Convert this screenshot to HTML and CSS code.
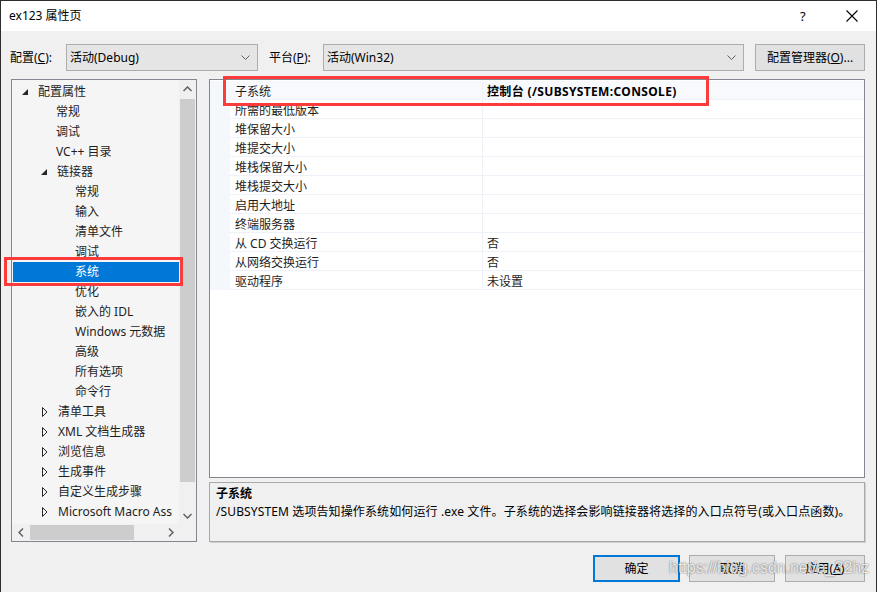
FILE: index.html
```html
<!DOCTYPE html>
<html lang="zh-CN">
<head>
<meta charset="utf-8">
<title>ex123 属性页</title>
<link rel="stylesheet" href="styles.css">
</head>
<body>
<div class="window">
  <div class="titlebar">
    <span class="title">ex123 属性页</span>
    <span class="help">?</span>
    <svg class="close" width="12" height="12" viewBox="0 0 12 12"><path d="M0.5 0.5 L11.5 11.5 M11.5 0.5 L0.5 11.5" stroke="#000" stroke-width="1.1" fill="none"/></svg>
  </div>
  <div class="content">
    <div class="config-row">
      <span class="lbl lbl-config">配置(<u>C</u>):</span>
      <div class="combo combo-config"><span>活动(Debug)</span><svg class="chev" width="9" height="5" viewBox="0 0 9 5"><path d="M0.5 0.5 L4.5 4.5 L8.5 0.5" stroke="#606060" fill="none"/></svg></div>
      <span class="lbl lbl-platform">平台(<u>P</u>):</span>
      <div class="combo combo-platform"><span>活动(Win32)</span><svg class="chev" width="9" height="5" viewBox="0 0 9 5"><path d="M0.5 0.5 L4.5 4.5 L8.5 0.5" stroke="#606060" fill="none"/></svg></div>
      <div class="btn btn-manager">配置管理器(<u>O</u>)...</div>
    </div>
    <div class="main">
      <div class="tree-panel">
        <div class="tree-top">
          <ul class="tree">
            <li class="row l0"><svg class="exp" width="6" height="6" viewBox="0 0 6 6"><polygon points="6,0 6,6 0,6" fill="#262626"/></svg><span>配置属性</span></li>
            <li class="row l1">常规</li>
            <li class="row l1">调试</li>
            <li class="row l1">VC++ 目录</li>
            <li class="row l1 parent"><svg class="exp" width="6" height="6" viewBox="0 0 6 6"><polygon points="6,0 6,6 0,6" fill="#262626"/></svg><span>链接器</span></li>
            <li class="row l2">常规</li>
            <li class="row l2">输入</li>
            <li class="row l2">清单文件</li>
            <li class="row l2">调试</li>
            <li class="row l2 selected">系统</li>
            <li class="row l2">优化</li>
            <li class="row l2">嵌入的 IDL</li>
            <li class="row l2">Windows 元数据</li>
            <li class="row l2">高级</li>
            <li class="row l2">所有选项</li>
            <li class="row l2">命令行</li>
            <li class="row l1 parent"><svg class="col" width="6" height="10" viewBox="0 0 6 10"><polygon points="0.5,0.5 5,5 0.5,9.5" fill="none" stroke="#262626"/></svg><span>清单工具</span></li>
            <li class="row l1 parent"><svg class="col" width="6" height="10" viewBox="0 0 6 10"><polygon points="0.5,0.5 5,5 0.5,9.5" fill="none" stroke="#262626"/></svg><span>XML 文档生成器</span></li>
            <li class="row l1 parent"><svg class="col" width="6" height="10" viewBox="0 0 6 10"><polygon points="0.5,0.5 5,5 0.5,9.5" fill="none" stroke="#262626"/></svg><span>浏览信息</span></li>
            <li class="row l1 parent"><svg class="col" width="6" height="10" viewBox="0 0 6 10"><polygon points="0.5,0.5 5,5 0.5,9.5" fill="none" stroke="#262626"/></svg><span>生成事件</span></li>
            <li class="row l1 parent"><svg class="col" width="6" height="10" viewBox="0 0 6 10"><polygon points="0.5,0.5 5,5 0.5,9.5" fill="none" stroke="#262626"/></svg><span>自定义生成步骤</span></li>
            <li class="row l1 parent"><svg class="col" width="6" height="10" viewBox="0 0 6 10"><polygon points="0.5,0.5 5,5 0.5,9.5" fill="none" stroke="#262626"/></svg><span>Microsoft Macro Ass</span></li>
          </ul>
          <div class="vscroll">
            <div class="sb-btn"><svg width="9" height="6" viewBox="0 0 9 6"><path d="M0.5 5 L4.5 1 L8.5 5" stroke="#606060" stroke-width="1.5" fill="none"/></svg></div>
            <div class="vtrack"><div class="vthumb"></div></div>
            <div class="sb-btn"><svg width="9" height="6" viewBox="0 0 9 6"><path d="M0.5 1 L4.5 5 L8.5 1" stroke="#606060" stroke-width="1.5" fill="none"/></svg></div>
          </div>
        </div>
        <div class="hscroll">
          <div class="sb-btn h"><svg width="6" height="9" viewBox="0 0 6 9"><path d="M5 0.5 L1 4.5 L5 8.5" stroke="#606060" stroke-width="1.5" fill="none"/></svg></div>
          <div class="htrack"><div class="hthumb"></div></div>
          <div class="sb-btn h"><svg width="6" height="9" viewBox="0 0 6 9"><path d="M1 0.5 L5 4.5 L1 8.5" stroke="#606060" stroke-width="1.5" fill="none"/></svg></div>
          <div class="corner"></div>
        </div>
        <div class="redbox tree-red"></div>
      </div>
      <div class="right-col">
        <div class="grid">
          <div class="grow first"><div class="gut"></div><div class="gname">子系统</div><div class="gval bold">控制台 (/SUBSYSTEM:CONSOLE)</div></div>
          <div class="grow"><div class="gut"></div><div class="gname">所需的最低版本</div><div class="gval"></div></div>
          <div class="grow"><div class="gut"></div><div class="gname">堆保留大小</div><div class="gval"></div></div>
          <div class="grow"><div class="gut"></div><div class="gname">堆提交大小</div><div class="gval"></div></div>
          <div class="grow"><div class="gut"></div><div class="gname">堆栈保留大小</div><div class="gval"></div></div>
          <div class="grow"><div class="gut"></div><div class="gname">堆栈提交大小</div><div class="gval"></div></div>
          <div class="grow"><div class="gut"></div><div class="gname">启用大地址</div><div class="gval"></div></div>
          <div class="grow"><div class="gut"></div><div class="gname">终端服务器</div><div class="gval"></div></div>
          <div class="grow"><div class="gut"></div><div class="gname">从 CD 交换运行</div><div class="gval">否</div></div>
          <div class="grow"><div class="gut"></div><div class="gname">从网络交换运行</div><div class="gval">否</div></div>
          <div class="grow"><div class="gut"></div><div class="gname">驱动程序</div><div class="gval">未设置</div></div>
          <div class="redbox grid-red"></div>
        </div>
        <div class="desc">
          <div class="desc-title">子系统</div>
          <div class="desc-text">/SUBSYSTEM 选项告知操作系统如何运行 .exe 文件。子系统的选择会影响链接器将选择的入口点符号(或入口点函数)。</div>
        </div>
      </div>
    </div>
    <div class="buttons">
      <div class="btn btn-ok">确定</div>
      <div class="btn btn-cancel">取消</div>
      <div class="btn btn-apply">应用(<u>A</u>)</div>
    </div>
  </div>
  <div class="watermark">https://blog.csdn.net/a_32hz</div>
</div>
</body>
</html>
```

FILE: styles.css
```css
* { box-sizing: border-box; }
html, body { margin: 0; padding: 0; }
body {
  font-family: "Noto Sans", "Noto Sans CJK SC", sans-serif;
  font-size: 12px;
  color: #000;
  background: #f0f0f0;
}
u { text-decoration: underline; text-underline-offset: 1px; }

.window {
  position: relative;
  width: 877px;
  height: 592px;
  border-top: 1px solid #2d2d2d;
  border-right: 1px solid #2d2d2d;
  border-left: 1px solid #2d2d2d;
  background: #f0f0f0;
  overflow: hidden;
}

.titlebar {
  height: 30px;
  background: #fff;
  display: flex;
  align-items: center;
  padding-left: 8px;
}
.title { flex: 1; font-size: 12px; line-height: 16px; }
.help { font-size: 13px; width: 14px; margin-right: 32px; color: #000; }
.close { margin-right: 18px; }

.content { display: flex; flex-direction: column; }

.config-row {
  display: flex;
  align-items: center;
  height: 27px;
  margin-top: 13px;
  padding-left: 9px;
}
.lbl { line-height: 16px; white-space: nowrap; }
.lbl-config { width: 56px; }
.lbl-platform { width: 54px; margin-left: 11px; }
.combo {
  height: 27px;
  border: 1px solid #adadad;
  background: #e5e5e5;
  display: flex;
  align-items: center;
  justify-content: space-between;
  padding: 0 7px 0 3px;
  line-height: 16px;
}
.combo-config { width: 192px; }
.combo-platform { width: 421px; }
.btn {
  height: 27px;
  border: 1px solid #adadad;
  background: #e1e1e1;
  display: flex;
  align-items: center;
  justify-content: center;
  line-height: 16px;
  white-space: nowrap;
}
.btn-manager { width: 110px; margin-left: 11px; }

.main {
  display: flex;
  margin-top: 8px;
  padding-left: 10px;
  height: 463px;
}

.tree-panel {
  position: relative;
  width: 186px;
  height: 463px;
  border: 1px solid #828790;
  display: flex;
  flex-direction: column;
}
.tree-top { display: flex; height: 444px; }
.tree {
  list-style: none;
  margin: 0;
  padding: 2px 0 0 1px;
  width: 167px;
  flex-shrink: 0;
  background: #f5f5f5;
  overflow: hidden;
}
.row {
  height: 20px;
  line-height: 20px;
  white-space: nowrap;
  display: flex;
  align-items: center;
  color: #1e1e1e;
  overflow: hidden;
}
.row svg { flex-shrink: 0; }
.row.l0 { padding-left: 9px; }
.row.l0 .exp { margin-right: 10px; margin-top: -1px; }
.row.l1 { padding-left: 43px; }
.row.l1.parent { padding-left: 28px; }
.row.l1.parent .exp { margin-right: 10px; margin-top: -1px; }
.row.l1.parent .col { margin-right: 10px; margin-left: 1px; }
.row.l2 { padding-left: 62px; }
.row.selected { background: #0078d7; color: #fff; }

.vscroll {
  width: 17px;
  background: #f0f0f0;
  display: flex;
  flex-direction: column;
}
.sb-btn {
  height: 17px;
  display: flex;
  align-items: center;
  justify-content: center;
}
.vtrack { flex: 1; padding: 2px 1px 25px 1px; display: flex; }
.vthumb { flex: 1; background: #cdcdcd; }

.hscroll {
  height: 17px;
  display: flex;
  background: #f0f0f0;
}
.sb-btn.h { width: 17px; height: 17px; }
.htrack { width: 133px; padding: 1px 16px 1px 1px; display: flex; }
.hthumb { width: 104px; background: #cdcdcd; }
.corner { width: 17px; }

.redbox {
  position: absolute;
  border: 3px solid #fe3b3b;
  pointer-events: none;
}
.tree-red { left: -8px; top: 177px; width: 179px; height: 29px; }

.right-col {
  margin-left: 12px;
  width: 656px;
  display: flex;
  flex-direction: column;
}
.grid {
  position: relative;
  height: 399px;
  border: 1px solid #828790;
  background: #fff;
  padding-top: 1px;
}
.grow {
  display: flex;
  height: 19px;
}
.gut { width: 20px; background: #f4f7fc; }
.gname, .gval {
  height: 19px;
  padding-top: 2px;
  line-height: 17px;
  border-bottom: 1px solid #eef1f7;
  color: #1e1e1e;
  white-space: nowrap;
}
.gname {
  width: 253px;
  padding-left: 5px;
  border-right: 1px solid #eef1f7;
}
.gval { flex: 1; padding-left: 4px; }
.grow.first .gname, .grow.first .gval { background: #f8f9fc; }
.gval.bold { font-weight: bold; color: #000; letter-spacing: 0.35px; }
.grid-red { left: 13px; top: -4px; width: 486px; height: 30px; }

.desc {
  margin-top: 4px;
  height: 60px;
  border: 1px solid #a8a8a8;
  box-shadow: 1px 1px 0 #cfcfcf;
  background: #f0f0f0;
  padding: 2px 6px;
}
.desc-title { font-weight: bold; line-height: 18px; }
.desc-text { line-height: 18px; white-space: nowrap; letter-spacing: 0.12px; }

.buttons {
  display: flex;
  justify-content: flex-end;
  margin-top: 13px;
  padding-right: 11px;
}
.btn-ok { width: 87px; border: 2px solid #0078d7; }
.btn-cancel { width: 86px; margin-left: 9px; }
.btn-apply { width: 80px; margin-left: 10px; }

.watermark {
  position: absolute;
  left: 668px;
  top: 558px;
  font-family: "Liberation Sans", sans-serif;
  font-size: 16px;
  color: rgba(255, 255, 255, 0.85);
  text-shadow: 0 0 2px rgba(0, 0, 0, 0.45), 0 0 1px rgba(0, 0, 0, 0.3);
  white-space: nowrap;
}
```
